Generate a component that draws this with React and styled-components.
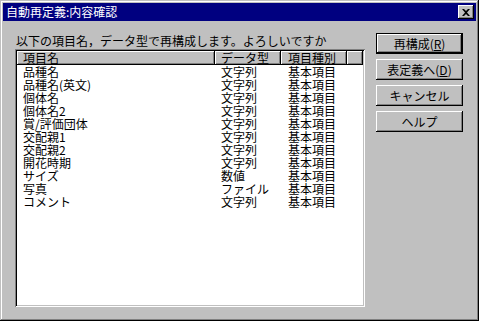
import React from "react";
import styled, { createGlobalStyle } from "styled-components";

const rows = [
  ["品種名", "文字列", "基本項目"],
  ["品種名(英文)", "文字列", "基本項目"],
  ["個体名", "文字列", "基本項目"],
  ["個体名2", "文字列", "基本項目"],
  ["賞/評価団体", "文字列", "基本項目"],
  ["交配親1", "文字列", "基本項目"],
  ["交配親2", "文字列", "基本項目"],
  ["開花時期", "文字列", "基本項目"],
  ["サイズ", "数値", "基本項目"],
  ["写真", "ファイル", "基本項目"],
  ["コメント", "文字列", "基本項目"]
];

const buttons = [
  { label: "再構成(", key: "R", def: true },
  { label: "表定義へ(", key: "D" },
  { label: "キャンセル" },
  { label: "ヘルプ" }
];

const App = () => {
  return (
    <>
      <Global />
      <Window>
        <TitleBar>
          <Title>自動再定義:内容確認</Title>
          <CloseButton>
            <svg width="8" height="7" viewBox="0 0 8 7">
              <path d="M0 0h2l2 2 2-2h2L5 3.5 8 7H6L4 5 2 7H0l3-3.5z" fill="#000" />
            </svg>
          </CloseButton>
        </TitleBar>
        <Body>
          <Main>
            <Label>以下の項目名，データ型で再構成します。よろしいですか</Label>
            <ListBox>
              <Header>
                <HeadCell>項目名</HeadCell>
                <HeadCell>データ型</HeadCell>
                <HeadCell $pad={7}>項目種別</HeadCell>
                <HeadCell />
              </Header>
              {rows.map((r) => (
                <Row key={r[0]}>
                  <Cell>{r[0]}</Cell>
                  <Cell>{r[1]}</Cell>
                  <Cell $pad={7}>{r[2]}</Cell>
                </Row>
              ))}
            </ListBox>
          </Main>
          <Side>
            {buttons.map((b) => (
              <Button key={b.label} $default={b.def}>
                {b.label}
                {b.key && (
                  <>
                    <u>{b.key}</u>)
                  </>
                )}
              </Button>
            ))}
          </Side>
        </Body>
      </Window>
    </>
  );
};

export default App;

const font = `"Noto Sans CJK JP", "Liberation Sans", sans-serif`;

const Global = createGlobalStyle`
    body {
      margin: 0;
      background: #c0c0c0;
      font-family: ${font};
    }
  `,
  Window = styled.div`
    box-sizing: border-box;
    width: 479px;
    height: 321px;
    padding: 3px;
    background: #c0c0c0;
    box-shadow: inset -1px -1px #000, inset 1px 1px #c0c0c0,
      inset -2px -2px #808080, inset 2px 2px #fff;
    display: flex;
    flex-direction: column;
  `,
  TitleBar = styled.div`
    height: 18px;
    background: #000080;
    display: flex;
    align-items: center;
    justify-content: space-between;
    padding: 0 2px 0 3px;
  `,
  Title = styled.span`
    color: #fff;
    font-size: 12px;
    line-height: 18px;
  `,
  CloseButton = styled.div`
    box-sizing: border-box;
    width: 16px;
    height: 14px;
    background: #c0c0c0;
    display: flex;
    align-items: center;
    justify-content: center;
    box-shadow: inset -1px -1px #000, inset 1px 1px #fff,
      inset -2px -2px #808080;
  `,
  Body = styled.div`
    flex: 1;
    display: flex;
    padding: 12px 0 0 12px;
  `,
  Main = styled.div`
    width: 350px;
    display: flex;
    flex-direction: column;
  `,
  Label = styled.div`
    height: 16px;
    font-size: 12px;
    line-height: 16px;
    padding-left: 1px;
    color: #000;
    white-space: nowrap;
  `,
  ListBox = styled.div`
    box-sizing: border-box;
    height: 258px;
    padding: 2px;
    background: #fff;
    box-shadow: inset 1px 1px #808080, inset -1px -1px #fff,
      inset 2px 2px #000, inset -2px -2px #c0c0c0;
  `,
  Header = styled.div`
    display: grid;
    grid-template-columns: 198px 66px 66px 1fr;
    height: 14px;
  `,
  HeadCell = styled.div`
    box-sizing: border-box;
    background: #c0c0c0;
    font-size: 12px;
    line-height: 14px;
    padding-left: ${(p) => p.$pad || 6}px;
    box-shadow: inset -1px -1px #000, inset 1px 1px #fff,
      inset -2px -2px #808080;
    white-space: nowrap;
  `,
  Row = styled.div`
    display: grid;
    grid-template-columns: 198px 66px 66px;
    height: 13px;
  `,
  Cell = styled.div`
    font-size: 12px;
    line-height: 13px;
    padding-left: ${(p) => p.$pad || 6}px;
    color: #000;
    white-space: nowrap;
  `,
  Side = styled.div`
    margin-left: 11px;
    display: flex;
    flex-direction: column;
    gap: 5px;
  `,
  Button = styled.div`
    box-sizing: border-box;
    width: 87px;
    height: 21px;
    background: #c0c0c0;
    font-size: 12px;
    line-height: 21px;
    text-align: center;
    color: #000;
    box-shadow: ${(p) =>
      p.$default
        ? "inset 0 0 0 1px #000, inset -2px -2px #000, inset 2px 2px #fff, inset -3px -3px #808080"
        : "inset -1px -1px #000, inset 1px 1px #fff, inset -2px -2px #808080"};
    u {
      text-underline-offset: 1px;
    }
  `;
